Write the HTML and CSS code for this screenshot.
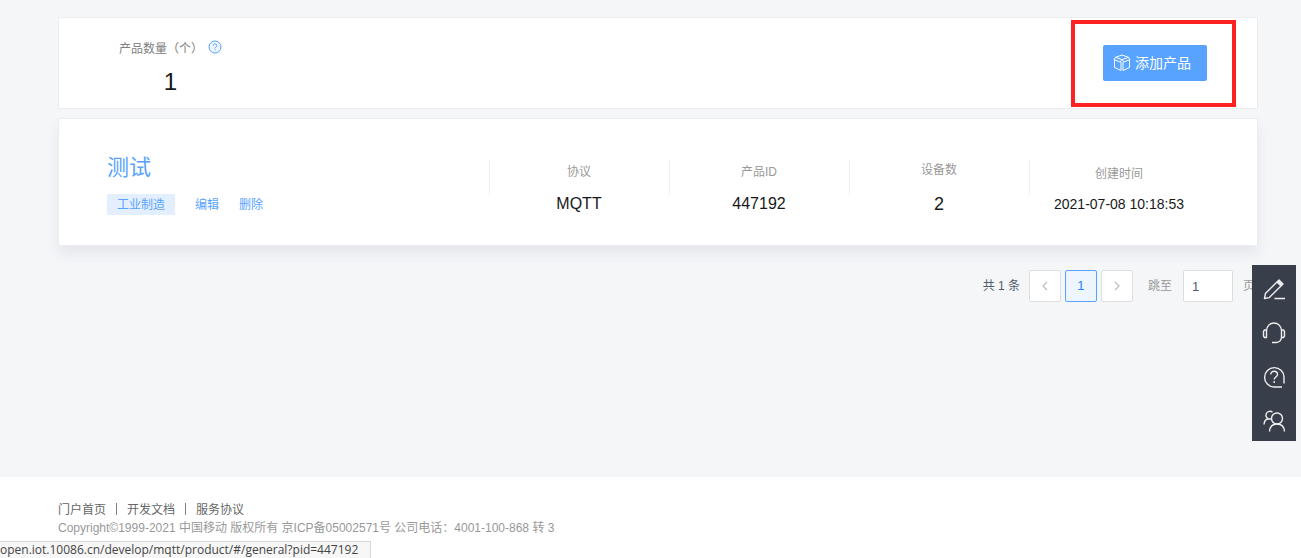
FILE: index.html
```html
<!DOCTYPE html>
<html lang="zh-CN">
<head>
  <meta charset="UTF-8" />
  <title>产品列表</title>
  <meta name="viewport" content="width=device-width, initial-scale=1" />
  <link rel="stylesheet" href="styles.css">
</head>
<body>
  <main class="main">
    <section class="summary">
      <div class="count">
        <div class="count-label">
          <span>产品数量（个）</span>
          <svg class="help" viewBox="0 0 14 14" fill="none" stroke="#57a3ff">
            <circle cx="7" cy="7" r="6" fill="#eef6ff" />
            <path d="M5.3 5.7c0-2.4 3.6-2.3 3.6 0 0 1.3-1.8 1.4-1.8 2.7M7.1 9.4v1" />
          </svg>
        </div>
        <div class="count-num">1</div>
      </div>
      <div class="highlight">
        <button type="button" class="add-btn">
          <svg viewBox="0 0 18 18" width="18" height="18" fill="none" stroke="#fff" stroke-linejoin="round">
            <path d="M9 1 15.5 3.300 9 5.600 2.500 3.300z" />
            <path d="M2.500 3.300 1 5.500 7 8 9 5.600 11 8l6-2.500-1.500-2.200" />
            <path d="M1.500 6v7.500L8 16.500V8M16.500 6v7.500L10 16.500V8" />
          </svg>
          添加产品
        </button>
      </div>
    </section>

    <section class="product">
      <div class="product-info">
        <h2 class="product-name">测试</h2>
        <div class="product-actions">
          <span class="tag">工业制造</span>
          <a href="#edit">编辑</a>
          <a href="#delete">删除</a>
        </div>
      </div>
      <div class="cell">
        <div class="cell-label">协议</div>
        <div class="cell-value">MQTT</div>
      </div>
      <div class="cell">
        <div class="cell-label">产品ID</div>
        <div class="cell-value">447192</div>
      </div>
      <div class="cell">
        <div class="cell-label">设备数</div>
        <div class="cell-value large">2</div>
      </div>
      <div class="cell">
        <div class="cell-label">创建时间</div>
        <div class="cell-value small">2021-07-08 10:18:53</div>
      </div>
    </section>

    <nav class="pager" aria-label="分页">
      <span class="total">共 1 条</span>
      <button type="button" class="page-btn" disabled aria-label="上一页">
        <svg viewBox="0 0 12 12" width="12" height="12"><path d="M8 2 4 6 8 10" /></svg>
      </button>
      <button type="button" class="page-btn active">1</button>
      <button type="button" class="page-btn" disabled aria-label="下一页">
        <svg viewBox="0 0 12 12" width="12" height="12"><path d="M4 2 8 6 4 10" /></svg>
      </button>
      <label class="jump" for="jump">跳至</label>
      <input type="text" id="jump" class="jump-input" value="1" />
      <span class="unit">页</span>
    </nav>
  </main>

  <footer class="footer">
    <div class="footer-links">
      <a href="#home">门户首页</a>
      <a href="#docs">开发文档</a>
      <a href="#terms">服务协议</a>
    </div>
    <div class="copyright">Copyright©1999-2021 中国移动 版权所有 京ICP备05002571号 公司电话：4001-100-868 转 3</div>
  </footer>

  <aside class="toolbar">
    <button type="button" aria-label="反馈">
      <svg viewBox="0 0 24 24"><path d="M2.5 21.5 3.4 16.6 17 3l4 4L7.3 20.6zM15 5l4 4M16 4l4 4M12.5 21.5H23" /></svg>
    </button>
    <button type="button" aria-label="客服">
      <svg viewBox="0 0 24 24"><path d="M4.5 9.5C5 5 8 2 12 2s7 3 7.5 7.5M4.5 9v7.500H2.500L1.500 15v-4.500L2.500 9zM19.500 9v7.500h2l1-1.500v-4.500L21.500 9zM19.500 16.500C19 19.500 17 21.300 14.500 21.500H10" /></svg>
    </button>
    <button type="button" aria-label="帮助">
      <svg viewBox="0 0 24 24"><path d="M20 22H12A9.700 9.700 0 1 1 22 12v6.500M8.800 9.500c0-4.500 6.700-4.300 6.700 0 0 2.500-3.300 2.500-3.300 5M12.200 16v2" /></svg>
    </button>
    <button type="button" aria-label="联系我们">
      <svg viewBox="0 0 24 24"><circle cx="15" cy="9.500" r="5.500" /><path d="M7.500 22.500c.3-4.500 3-7.500 7.500-7.500s7.200 3 7.500 7.500M10.500 3.200A4 4 0 1 0 6.500 10H9M2 15.500c.3-3.500 2-5.500 4.500-5.500" /></svg>
    </button>
  </aside>

  <div class="status">open.iot.10086.cn/develop/mqtt/product/#/general?pid=447192</div>
</body>
</html>
```
FILE: styles.css
```css
* { box-sizing: border-box; }
body {
  margin: 0;
  min-height: 100vh;
  display: flex;
  flex-direction: column;
  background: #f4f6f8;
  color: #17181a;
  font: 12px/18px "Liberation Sans", Arial, "Noto Sans CJK SC", sans-serif;
}
a { color: #57a3ff; text-decoration: none; }
button, input { font: inherit; }
button { cursor: pointer; }

.main { flex: 1; padding: 17px 43px 24px 58px; }

/* summary */
.summary {
  display: flex;
  justify-content: space-between;
  align-items: center;
  height: 92px;
  padding: 0 21px 0 60px;
  background: #fff;
  border: 1px solid #ebedf0;
}
.count { padding-top: 10px; text-align: center; }
.count-label { display: flex; align-items: flex-start; gap: 5px; color: #808080; }
.help { width: 14px; height: 14px; }
.count-num { margin-top: 9px; font-size: 24px; line-height: 30px; }
.highlight { padding: 21px 25px 22px 28px; border: 4px solid #fc2222; }
.add-btn {
  display: flex;
  align-items: center;
  gap: 4px;
  height: 36px;
  padding: 0 16px 0 10px;
  border: 0;
  border-radius: 2px;
  background: #57a3ff;
  color: #fff;
  font-size: 14px;
}

/* product card */
.product {
  display: flex;
  margin-top: 9px;
  height: 128px;
  padding: 0 48px;
  background: #fff;
  border: 1px solid #ebedf0;
  box-shadow: 0 8px 12px rgba(60, 70, 110, 0.08);
}
.product-info { flex: 1; padding-top: 33px; }
.product-name {
  margin: 0 0 10px;
  color: #57a3ff;
  font-size: 22px;
  font-weight: normal;
  line-height: 32px;
}
.product-actions { display: flex; align-items: center; gap: 20px; line-height: 20px; }
.tag { padding: 1px 10px 0; background: #e3efff; color: #57a3ff; }
.cell {
  display: flex;
  flex-direction: column;
  justify-content: center;
  width: 180px;
  padding-top: 19px;
  text-align: center;
  background: linear-gradient(#f0f1f4, #f0f1f4) 0 40px / 1px 36px no-repeat;
}
.cell-label { margin-bottom: 7px; color: #999; }
.cell-value { font-size: 16px; line-height: 2; }
.cell-value.large { font-size: 18px; }
.cell-value.small { font-size: 14px; }

/* pager */
.pager {
  display: flex;
  justify-content: flex-end;
  align-items: center;
  gap: 4px;
  margin-top: 24px;
  padding-right: 3px;
  color: #999;
}
.total { margin-right: 5px; color: #515a6e; }
.page-btn {
  display: flex;
  align-items: center;
  justify-content: center;
  width: 32px;
  height: 32px;
  padding: 0;
  background: #fff;
  border: 1px solid #dcdee2;
  border-radius: 2px;
}
.page-btn svg { fill: none; stroke: #c0c2c6; stroke-width: 1.4; }
.page-btn.active { background: #edf5ff; border-color: #57a3ff; color: #2d84ef; font-size: 13px; }
.jump { margin: 0 7px 0 11px; }
.jump-input {
  width: 50px;
  height: 32px;
  padding: 0 8px;
  border: 1px solid #dcdee2;
  border-radius: 2px;
  color: #515a6e;
  font-size: 13px;
}
.unit { margin-left: 6px; }

.footer { padding: 24px 58px 21px; background: #fff; }
.footer-links { display: flex; }
.footer-links a { color: #666; }
.footer-links a + a {
  margin-left: 10px;
  padding-left: 11px;
  background: linear-gradient(#808080, #808080) 0 2px / 1px 12px no-repeat;
}
.copyright { color: #999; }

/* floating tools */
.toolbar {
  position: fixed;
  right: 5px;
  bottom: 117px;
  width: 44px;
  background: #393e4b;
}
.toolbar button {
  display: flex;
  align-items: center;
  justify-content: center;
  width: 44px;
  height: 44px;
  padding: 4px 0 0;
  border: 0;
  background: none;
}
.toolbar svg { width: 24px; height: 24px; fill: none; stroke: #eee; stroke-width: 1.4; stroke-linejoin: round; }

.status {
  position: fixed;
  left: 0;
  bottom: 0;
  padding-right: 12px;
  background: #f7f7f7;
  border: 1px solid #d5d7d9;
  border-width: 1px 1px 0 0;
  color: #444;
  font-family: "Open Sans", "Noto Sans", sans-serif;
  line-height: 16px;
  white-space: nowrap;
}
```
